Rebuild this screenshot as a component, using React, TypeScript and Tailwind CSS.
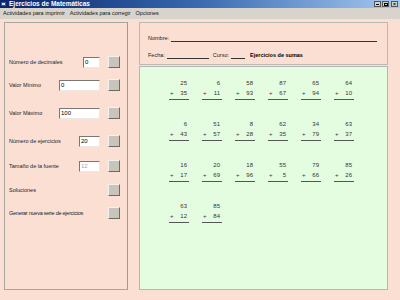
import React from "react";

const problems: [number, number][] = [
  [25, 35], [6, 11], [58, 93], [87, 67], [65, 94], [64, 10],
  [6, 43], [51, 57], [8, 28], [62, 35], [34, 79], [63, 37],
  [16, 17], [20, 69], [18, 96], [55, 5], [79, 66], [85, 26],
  [63, 12], [85, 84],
];

function Btn() {
  return (
    <div className="w-[12px] h-[12px] bg-[#c8c4bc] border border-t-[#f4f2ee] border-l-[#f4f2ee] border-r-[#6e6a64] border-b-[#6e6a64] shrink-0" />
  );
}

function Input({ w, v, disabled }: { w: string; v: string; disabled?: boolean }) {
  return (
    <div
      className={`${w} h-[11px] shrink-0 bg-white border border-t-[#7a7670] border-l-[#7a7670] border-r-[#ebe8e2] border-b-[#ebe8e2] text-[6px] leading-[9px] pl-[1px] ${disabled ? "text-[#a8a8a8]" : "text-black"}`}
    >
      {v}
    </div>
  );
}

function Row({ label, input, mt, tight }: { label: string; input?: React.ReactNode; mt: string; tight?: boolean }) {
  return (
    <div className={`flex items-center h-[12px] ${mt}`}>
      <div className={`flex-1 min-w-0 whitespace-nowrap text-[5.5px] text-[#222] ${tight ? "tracking-[-0.25px]" : ""}`}>{label}</div>
      {input}
      <div className="w-[8px] shrink-0" />
      <Btn />
    </div>
  );
}

export default function App() {
  return (
    <div
      className="w-[400px] h-[300px] flex flex-col overflow-hidden bg-[#fbdfd3]"
      style={{ fontFamily: '"Liberation Sans", Arial, sans-serif' }}
    >
      {/* Title bar */}
      <div className="h-[8px] flex items-center bg-gradient-to-r from-[#0a246a] via-[#3a6ab0] to-[#a6caf0]">
        <div className="w-[5px] h-[4px] ml-[1px] mr-[3px] bg-[#d8e4f8] border-[0.5px] border-[#3050a0]" />
        <span className="text-[6.5px] font-bold text-white leading-none">Ejercicios de Matemáticas</span>
        <div className="flex-1" />
        <div className="flex gap-[1px] mr-[2px]">
          <div className="w-[7px] h-[6px] bg-[#d4d0c8] border-[0.5px] border-[#555] flex items-end justify-center pb-[1px]"><div className="w-[3px] h-[1px] bg-black" /></div>
          <div className="w-[7px] h-[6px] bg-[#d4d0c8] border-[0.5px] border-[#555] flex items-center justify-center"><div className="w-[4px] h-[3px] border-[0.5px] border-black border-t-[1px]" /></div>
          <div className="w-[7px] h-[6px] ml-[1px] bg-[#d4d0c8] border-[0.5px] border-[#555] flex items-center justify-center text-[5px] font-bold leading-none text-black">×</div>
        </div>
      </div>
      {/* Menu bar */}
      <div className="h-[12px] flex items-center bg-[#d8d4cc] text-[5.5px] text-[#111] pl-[3px] gap-[5px] border-b border-[#e8e4de]">
        <span>Actividades para imprimir</span>
        <span>Actividades para corregir</span>
        <span>Opciones</span>
      </div>
      {/* Body */}
      <div className="flex-1 flex pt-[2px] pl-[4px]">
        {/* Left panel */}
        <div className="w-[124px] h-[268px] border border-[#a8a4a0] border-r-[#9c9894] pl-[4px] pr-[7px] pt-[33px] flex flex-col">
          <Row mt="mt-0" label="Número de decimales" input={<Input w="w-[17px]" v="0" />} />
          <Row mt="mt-[11px]" label="Valor Mínimo" input={<Input w="w-[41px]" v="0" />} />
          <Row mt="mt-[16px]" label="Valor Máximo" input={<Input w="w-[41px]" v="100" />} />
          <Row mt="mt-[16px]" label="Número de ejercicios" input={<Input w="w-[21px]" v="20" />} />
          <Row mt="mt-[13px]" label="Tamaño de la fuente" input={<Input w="w-[21px]" v="12" disabled />} />
          <Row mt="mt-[12px]" label="Soluciones" />
          <Row mt="mt-[11px]" label="Generar nueva serie de ejercicios" tight />
        </div>
        <div className="w-[11px]" />
        {/* Right column */}
        <div className="w-[249px] flex flex-col">
          <div className="h-[43px] border border-[#bcb8b4] pl-[8px] pt-[11px] text-[5.5px] text-[#222]">
            <div className="flex items-end h-[8px]">
              <span>Nombre:</span>
              <div className="ml-[2px] w-[206px] border-b border-[#333] mb-[0.5px]" />
            </div>
            <div className="flex items-end h-[8px] mt-[9px]">
              <span>Fecha:</span>
              <div className="ml-[2px] w-[42px] border-b border-[#333] mb-[0.5px]" />
              <span className="ml-[4px]">Curso:</span>
              <div className="ml-[2px] w-[14px] border-b border-[#333] mb-[0.5px]" />
              <span className="ml-[5px] font-bold text-black">Ejercicios de sumas</span>
            </div>
          </div>
          <div className="h-[224px] mt-[1px] bg-[#e4fde0] border border-[#b8b6b0] pl-[29px] pt-[11px]">
            <div className="grid grid-cols-[repeat(6,20px)] gap-x-[13px] gap-y-[19px]">
              {problems.map(([a, b], i) => (
                <div key={i} className="w-[20px] text-[6px] text-[#333] border-b border-[#555]">
                  <div className="h-[10px] leading-[10px] text-right pr-[2px]">{a}</div>
                  <div className="h-[10px] leading-[10px] flex justify-between pl-[1px] pr-[2px]">
                    <span>+</span>
                    <span>{b}</span>
                  </div>
                  <div className="h-[1px]" />
                </div>
              ))}
            </div>
          </div>
        </div>
      </div>
    </div>
  );
}
